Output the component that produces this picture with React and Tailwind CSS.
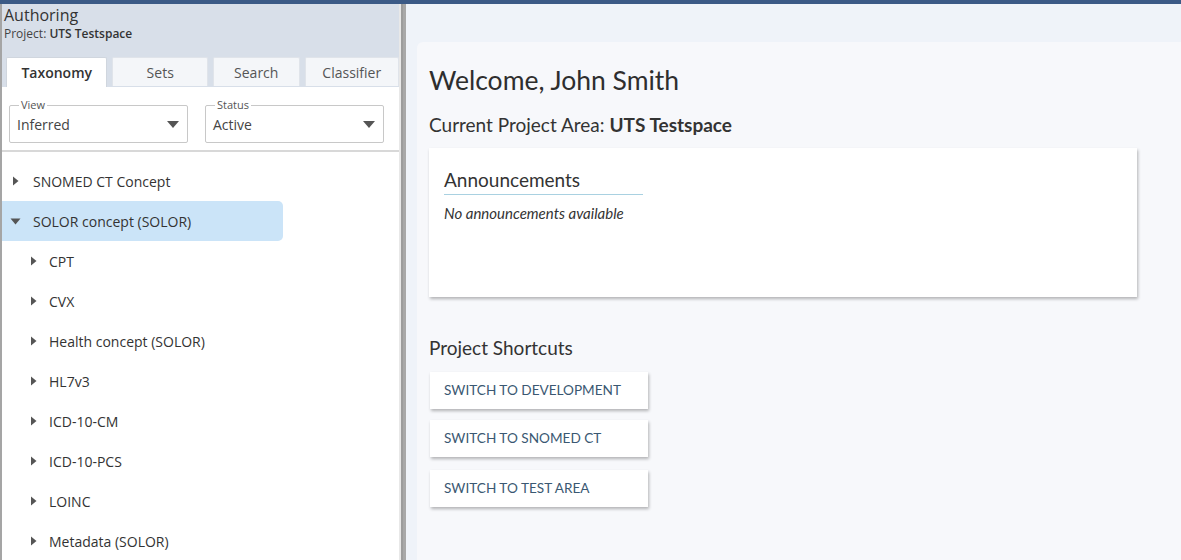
import React from "react";

const Caret = () => (
  <svg width="6" height="10" viewBox="0 0 6 10">
    <path d="M0 0.5 L5.5 5 L0 9.5 Z" fill="#555" />
  </svg>
);
const CaretDown = () => (
  <svg width="11" height="7" viewBox="0 0 11 7">
    <path d="M0.5 0.5 L10.5 0.5 L5.5 6.5 Z" fill="#555" />
  </svg>
);

function Select({ label, value }) {
  return (
    <div className="relative h-[38px] w-[179px] rounded-[2px] border border-[#c8c8c8] bg-white">
      <span className="absolute left-[9px] top-[-7px] bg-white px-[2px] text-[11px] leading-[12px] text-[#555]">
        {label}
      </span>
      <div className="flex h-full items-center justify-between pl-[7px] pr-[8px] pt-[1px]">
        <span className="text-[14px] text-[#444]">{value}</span>
        <svg width="12" height="7" viewBox="0 0 12 7">
          <path d="M0 0 L12 0 L6 7 Z" fill="#555" />
        </svg>
      </div>
    </div>
  );
}

function TreeRow({ label, indent, open, selected }) {
  return (
    <div
      className={
        "flex h-[40px] items-center " +
        (selected ? "w-[281px] rounded-r-[5px] bg-[#cbe4f8] " : "") +
        (indent ? "pl-[29px]" : open ? "pl-[8px]" : "pl-[11px]")
      }
    >
      <span
        className={
          "flex items-center " +
          (indent ? "w-[18px]" : open ? "w-[23px]" : "w-[20px]")
        }
      >
        {open ? <CaretDown /> : <Caret />}
      </span>
      <span className="text-[14px] text-[#333]">{label}</span>
    </div>
  );
}

export default function App() {
  const tabs = [
    { name: "Taxonomy", w: "w-[102px]", active: true },
    { name: "Sets", w: "w-[96px]" },
    { name: "Search", w: "w-[87px]" },
    { name: "Classifier", w: "w-[95px]" },
  ];
  const children = [
    "CPT",
    "CVX",
    "Health concept (SOLOR)",
    "HL7v3",
    "ICD-10-CM",
    "ICD-10-PCS",
    "LOINC",
    "Metadata (SOLOR)",
  ];
  return (
    <div className="flex h-[560px] w-[1181px] flex-col overflow-hidden bg-[#eff3f9]">
      <div className="h-[4px] w-full shrink-0 bg-[#3b5a86]" />
      <div className="flex min-h-0 flex-1">
        {/* Left panel */}
        <div
          className="flex w-[401px] shrink-0 flex-col border-l-[2px] border-r-[2px] border-l-[#a5a5a5] border-r-[#e8e8e8] bg-white"
          style={{ fontFamily: '"Open Sans", sans-serif' }}
        >
          <div className="bg-[#d8dfe9] pl-[2px]">
            <div className="pt-[1px] text-[16px] leading-[20px] text-[#333]">Authoring</div>
            <div className="mt-[2px] text-[12px] leading-[14px] text-[#444]">
              Project: <span className="font-semibold text-[#333]">UTS Testspace</span>
            </div>
            <div className="mt-[16px] flex gap-[5px] pl-[2px]">
              {tabs.map((t) => (
                <div
                  key={t.name}
                  className={
                    t.w +
                    " flex items-center justify-center rounded-t-[2px] border border-b-0 text-[14px] " +
                    (t.active
                      ? "h-[30px] border-[#d0d6de] bg-white font-semibold text-[#333]"
                      : "mb-[1px] h-[29px] border-[#e0e4ea] bg-[#f4f6f9] text-[#555]")
                  }
                >
                  {t.name}
                </div>
              ))}
            </div>
          </div>
          <div className="flex gap-[17px] border-b-[2px] border-[#d8d8d8] pb-[7px] pl-[7px] pt-[18px]">
            <Select label="View" value="Inferred" />
            <Select label="Status" value="Active" />
          </div>
          <div className="pt-[9px]">
            <TreeRow label="SNOMED CT Concept" />
            <TreeRow label="SOLOR concept (SOLOR)" open selected />
            {children.map((c) => (
              <TreeRow key={c} label={c} indent />
            ))}
          </div>
        </div>
        {/* Separator */}
        <div className="w-[5px] shrink-0 border-l-[2px] border-[#9c9c9c] bg-[#a8a8a8]" />
        {/* Right */}
        <div
          className="flex min-w-0 flex-1 flex-col pl-[11px] pt-[38px]"
          style={{ fontFamily: 'Lato, "Open Sans", sans-serif' }}
        >
          <div className="flex-1 rounded-tl-[6px] bg-[#f7f8fb] pl-[12px] pt-[20px]">
            <div className="text-[26.5px] leading-[36px] text-[#2e2e2e]">Welcome, John Smith</div>
            <div className="mt-[14px] text-[19px] leading-[26px] text-[#333]">
              Current Project Area: <span className="font-bold">UTS Testspace</span>
            </div>
            <div className="mt-[10px] h-[149px] w-[708px] bg-white px-[15px] pt-[20px] shadow-[1px_2px_3px_rgba(0,0,0,0.28)]">
              <div className="w-[199px] border-b border-[#a9d1e1] pb-[2px] text-[19px] leading-[24px] text-[#333]">
                Announcements
              </div>
              <div className="mt-[8px] text-[15px] italic leading-[20px] text-[#333]">
                No announcements available
              </div>
            </div>
            <div className="mt-[38px] text-[19px] leading-[26px] text-[#333]">Project Shortcuts</div>
            <div className="mt-[11px] flex flex-col pl-[1px]">
              {["SWITCH TO DEVELOPMENT", "SWITCH TO SNOMED CT", "SWITCH TO TEST AREA"].map((b, i) => (
                <div
                  key={b}
                  className={
                    "flex h-[37px] w-[218px] items-center bg-white pl-[14px] text-[13.6px] text-[#3a5872] shadow-[1px_2px_3px_rgba(0,0,0,0.28)] " +
                    (i === 1 ? "mt-[11px]" : i === 2 ? "mt-[13px]" : "")
                  }
                >
                  {b}
                </div>
              ))}
            </div>
          </div>
        </div>
      </div>
    </div>
  );
}
